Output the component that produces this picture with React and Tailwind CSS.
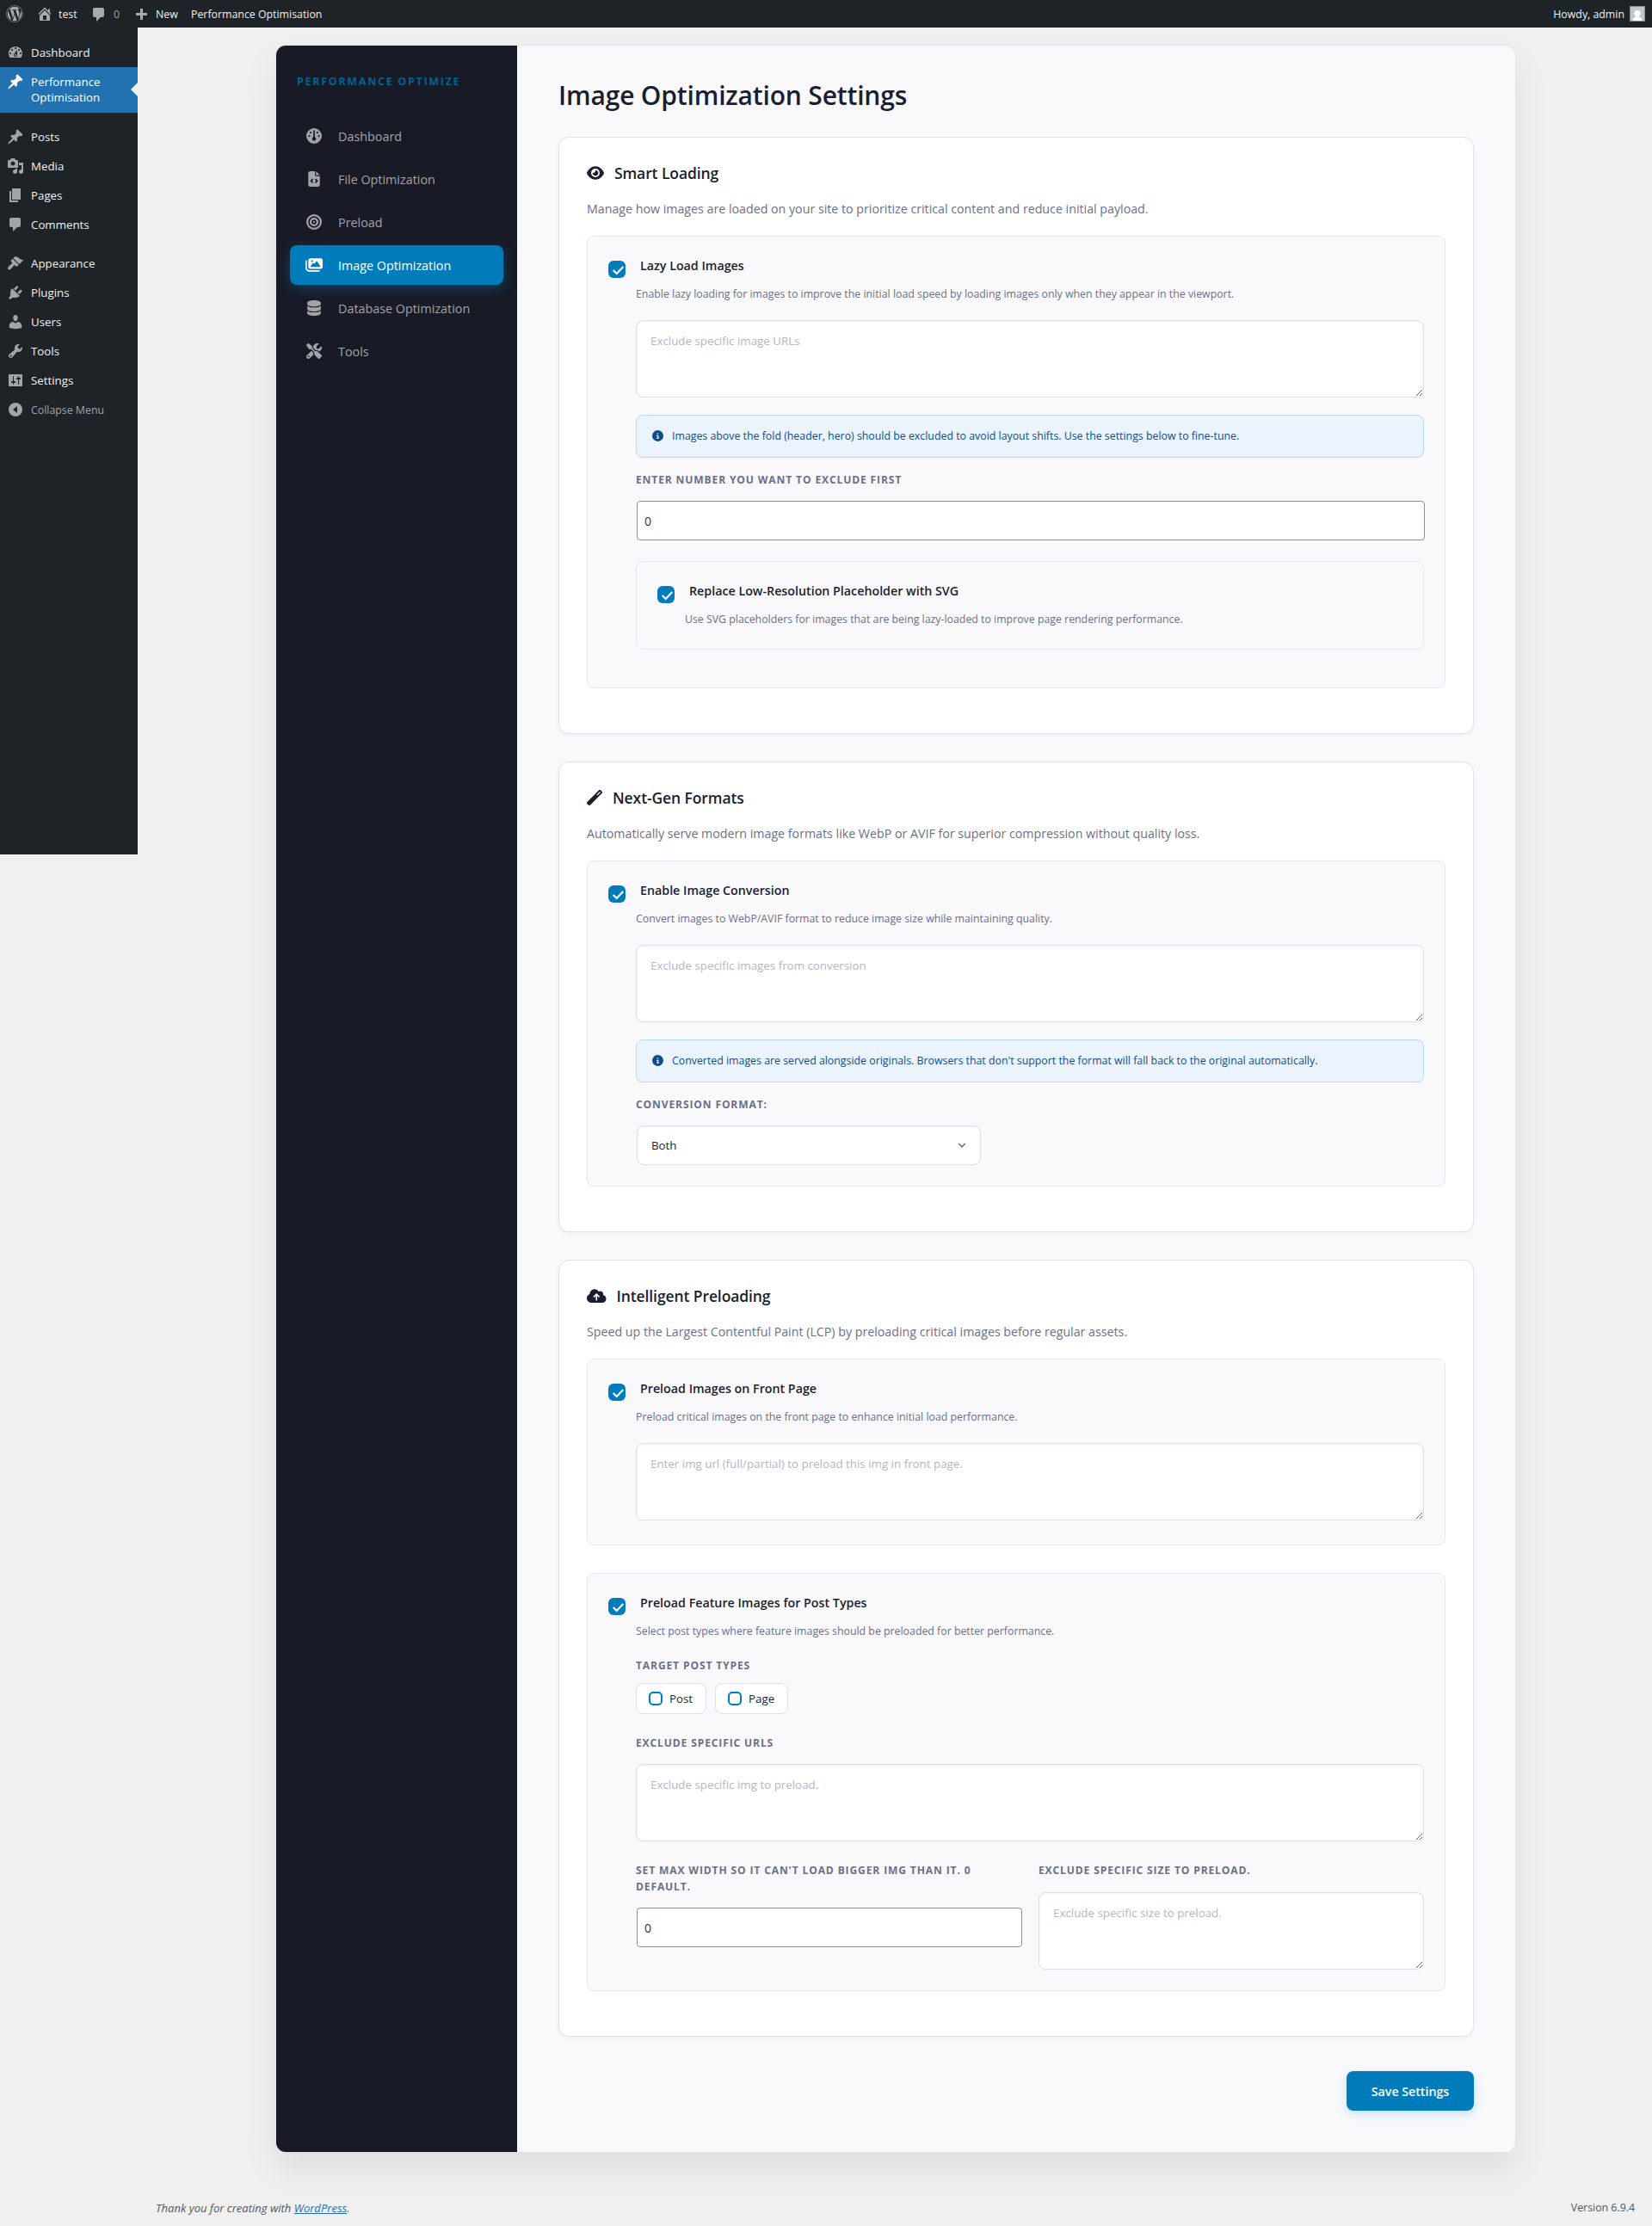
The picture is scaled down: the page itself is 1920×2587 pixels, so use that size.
import React, { useState } from 'react';
import clsx from 'clsx';
import {
  FaBullseye,
  FaCircleInfo,
  FaCloudArrowUp,
  FaDatabase,
  FaEye,
  FaFileCode,
  FaGauge,
  FaImages,
  FaScrewdriverWrench,
  FaWandMagic,
  FaWordpress,
} from 'react-icons/fa6';

// 20x20 admin menu glyphs
const glyphs = {
  home: 'M16 8.5l1.53 1.53-1.06 1.06L10 4.6l-6.47 6.49-1.06-1.06L10 2.5l4 4v-2h2v4zm-6-2.46l6 5.99V18H4v-5.97zM12 17v-5H8v5h4z',
  comments: 'M5 2h9c1.1 0 2 .9 2 2v7c0 1.1-.9 2-2 2h-2l-5 5v-5H5c-1.1 0-2-.9-2-2V4c0-1.1.9-2 2-2z',
  plus: 'M17 7v3h-5v5H9v-5H4V7h5V2h3v5h5z',
  dashboard:
    'M3.76 16h12.48c1.1-1.37 1.76-3.11 1.76-5 0-4.42-3.58-8-8-8s-8 3.58-8 8c0 1.89.66 3.63 1.76 5zM10 4c.55 0 1 .45 1 1s-.45 1-1 1-1-.45-1-1 .45-1 1-1zM6 6c.55 0 1 .45 1 1s-.45 1-1 1-1-.45-1-1 .45-1 1-1zm8 0c.55 0 1 .45 1 1s-.45 1-1 1-1-.45-1-1 .45-1 1-1zm-5.37 5.55L12 7v6c0 1.1-.9 2-2 2s-2-.9-2-2c0-.57.24-1.08.63-1.45zM4 10c.55 0 1 .45 1 1s-.45 1-1 1-1-.45-1-1 .45-1 1-1zm12 0c.55 0 1 .45 1 1s-.45 1-1 1-1-.45-1-1 .45-1 1-1zm-5 3c0-.55-.45-1-1-1s-1 .45-1 1 .45 1 1 1 1-.45 1-1z',
  pin: 'M10.44 3.02l1.82-1.82 6.36 6.35-1.83 1.82c-1.05-.68-2.48-.57-3.41.36l-.75.75c-.92.93-1.04 2.35-.35 3.41l-1.83 1.82-2.41-2.41-2.8 2.79c-.42.42-3.38 2.71-3.8 2.29s1.86-3.39 2.28-3.81l2.79-2.79L4.1 9.36l1.83-1.82c1.05.69 2.48.57 3.4-.36l.75-.75c.93-.92 1.05-2.35.36-3.41z',
  media:
    'M13 11V4c0-.55-.45-1-1-1h-1.67L9 1H5L3.67 3H2c-.55 0-1 .45-1 1v7c0 .55.45 1 1 1h10c.55 0 1-.45 1-1zM7 4.5c1.38 0 2.5 1.12 2.5 2.5S8.38 9.5 7 9.5 4.5 8.38 4.5 7 5.62 4.5 7 4.5zM14 6h5v10.5c0 1.38-1.12 2.5-2.5 2.5S14 17.88 14 16.5s1.12-2.5 2.5-2.5c.17 0 .34.02.5.05V9h-3V6zm-4 8.05V13h2v3.5c0 1.38-1.12 2.5-2.5 2.5S7 17.88 7 16.5 8.12 14 9.5 14c.17 0 .34.02.5.05z',
  page: 'M6 15V2h10v13H6zm-1 1h8v2H3V5h2v11z',
  appearance:
    'M14.48 11.06L7.41 3.99l1.5-1.5c.5-.56 2.3-.47 3.51.32 1.21.8 1.43 1.28 2.91 2.1 1.18.64 2.45 1.26 4.45.85zm-.71.71L6.7 4.7 4.93 6.47c-.39.39-.39 1.02 0 1.41l1.06 1.06c.39.39.39 1.03 0 1.42-.6.6-1.43 1.11-2.21 1.69-.35.26-.7.53-1.01.84C1.43 14.23.4 16.08 1.4 17.07c.99 1 2.84-.03 4.18-1.36.31-.31.58-.66.85-1.02.57-.78 1.08-1.61 1.69-2.21.39-.39 1.02-.39 1.41 0l1.06 1.06c.39.39 1.02.39 1.41 0z',
  plugins:
    'M13.11 4.36L9.87 7.6 8 5.73l3.24-3.24c.35-.34 1.05-.2 1.56.32.52.51.66 1.21.31 1.55zm-8 1.77l.91-1.12 9.01 9.01-1.19.84c-.71.71-2.63 1.16-3.82 1.16H6.14L4.9 17.26c-.59.59-1.54.59-2.12 0-.59-.58-.59-1.53 0-2.12l1.24-1.24v-3.88c0-1.13.4-3.19 1.09-3.89zm7.26 3.97l3.24-3.24c.34-.35 1.04-.21 1.55.31.52.51.66 1.21.31 1.55l-3.24 3.25z',
  users:
    'M10 9.25c-2.27 0-2.73-3.44-2.73-3.44C7 4.02 7.82 2 9.97 2c2.16 0 2.98 2.02 2.71 3.81 0 0-.41 3.44-2.68 3.44zm0 2.57L12.72 10c2.39 0 4.52 2.33 4.52 4.53v2.49s-3.65 1.13-7.24 1.13c-3.65 0-7.24-1.13-7.24-1.13v-2.49c0-2.25 1.94-4.48 4.47-4.48z',
  tools:
    'M16.68 9.77c-1.34 1.34-3.3 1.67-4.95.99l-5.41 6.52c-.99.99-2.59.99-3.58 0s-.99-2.59 0-3.57l6.52-5.42c-.68-1.65-.35-3.61.99-4.95 1.28-1.28 3.12-1.62 4.72-1.06l-2.89 2.89 2.82 2.82 2.86-2.87c.53 1.58.18 3.39-1.08 4.65zM3.81 16.21c.4.39 1.04.39 1.43 0 .4-.4.4-1.04 0-1.43-.39-.4-1.03-.4-1.43 0-.39.39-.39 1.03 0 1.43z',
  settings:
    'M18 16V4c0-.55-.45-1-1-1H3c-.55 0-1 .45-1 1v12c0 .55.45 1 1 1h14c.55 0 1-.45 1-1zM8 11h1c.55 0 1 .45 1 1s-.45 1-1 1H8v1.5c0 .28-.22.5-.5.5s-.5-.22-.5-.5V13H6c-.55 0-1-.45-1-1s.45-1 1-1h1V5.5c0-.28.22-.5.5-.5s.5.22.5.5V11zm5-2h-1c-.55 0-1-.45-1-1s.45-1 1-1h1V5.5c0-.28.22-.5.5-.5s.5.22.5.5V7h1c.55 0 1 .45 1 1s-.45 1-1 1h-1v5.5c0 .28-.22.5-.5.5s-.5-.22-.5-.5V9z',
  collapse: 'M10 2a8 8 0 1 0 0 16 8 8 0 0 0 0-16zM12 6v8l-5-4z',
};

const Glyph = ({ name, className }) => (
  <svg viewBox="0 0 20 20" fillRule="evenodd" className={clsx('w-5 h-5 shrink-0 fill-current', className)}>
    <path d={glyphs[name]} />
  </svg>
);

const adminMenu = [
  [
    { label: 'Dashboard', icon: 'dashboard' },
    { label: 'Performance Optimisation', icon: 'pin', current: true },
  ],
  [
    { label: 'Posts', icon: 'pin' },
    { label: 'Media', icon: 'media' },
    { label: 'Pages', icon: 'page' },
    { label: 'Comments', icon: 'comments' },
  ],
  [
    { label: 'Appearance', icon: 'appearance' },
    { label: 'Plugins', icon: 'plugins' },
    { label: 'Users', icon: 'users' },
    { label: 'Tools', icon: 'tools' },
    { label: 'Settings', icon: 'settings' },
    { label: 'Collapse Menu', icon: 'collapse', muted: true },
  ],
];

const tabs = [
  { label: 'Dashboard', Icon: FaGauge },
  { label: 'File Optimization', Icon: FaFileCode },
  { label: 'Preload', Icon: FaBullseye },
  { label: 'Image Optimization', Icon: FaImages },
  { label: 'Database Optimization', Icon: FaDatabase },
  { label: 'Tools', Icon: FaScrewdriverWrench },
];

const AdminBar = () => (
  <header className="h-8 flex items-center bg-[#1d2327] text-[#f0f0f1] text-[12.35px] leading-8 pl-[7px] pr-2">
    <FaWordpress size={20} className="text-[#a7aaad]" />
    <Glyph name="home" className="ml-[15px] text-[#a7aaad]" />
    <span className="ml-1.5 w-[37px] pt-px">test</span>
    <Glyph name="comments" className="mt-0.5 text-[#a7aaad]" />
    <span className="ml-[7px] w-[22px] pt-px text-[#9ca1a6]">0</span>
    <Glyph name="plus" className="mt-1 text-[#a7aaad]" />
    <span className="ml-[7px] w-[41px] pt-px">New</span>
    <span className="pt-px">Performance Optimisation</span>
    <span className="ml-auto pt-px">Howdy, admin</span>
    <svg viewBox="0 0 18 18" className="w-[18px] h-[18px] ml-1.5">
      <rect x="0.5" y="0.5" width="17" height="17" fill="#c3c4c7" stroke="#8c8f94" />
      <circle cx="9" cy="8.6" r="3.7" fill="#fff" />
      <path d="M3.5 17c.2-2.6 2-4 3.7-4.4h3.6c1.7.4 3.5 1.8 3.7 4.4z" fill="#fff" />
    </svg>
  </header>
);

const AdminMenu = () => (
  <nav className="w-40 h-[961px] shrink-0 pt-3 bg-[#1d2327] text-[#f0f0f1] text-[13.3px] leading-[18px]">
    {adminMenu.map((group, i) => (
      <ul key={i} className="mb-[11px]">
        {group.map(({ label, icon, current, muted }) => (
          <li
            key={label}
            className={clsx(
              'relative flex gap-2 pl-2',
              current ? 'h-[53px] bg-[#2271b1] text-white' : 'h-[34px]',
            )}
          >
            <Glyph name={icon} className={clsx('mt-[7px]', !current && 'text-[#a1a5a9]')} />
            <span className={clsx('w-[110px]', muted ? 'pt-[9px] text-[12.35px] text-[#a1a5a9]' : 'pt-2')}>{label}</span>
            {current && (
              <span className="absolute right-0 top-[18px] border-8 border-l-0 border-transparent border-r-[#f0f0f1]" />
            )}
          </li>
        ))}
      </ul>
    ))}
  </nav>
);

const Tabs = ({ active, onChange }) => (
  <aside className="w-[280px] shrink-0 px-4 bg-[#181a25] rounded-l-[11px]">
    <h2 className="pt-8 pl-2 h-[82px] text-[12.5px] leading-[20px] font-bold tracking-[1.7px] whitespace-nowrap text-[#00628f]">
      PERFORMANCE OPTIMIZE
    </h2>
    <ul className="flex flex-col gap-1">
      {tabs.map(({ label, Icon }) => (
        <li key={label}>
          <button
            onClick={() => onChange(label)}
            className={clsx(
              'flex items-center w-full h-[46px] pl-[18px] rounded-lg text-[14.35px]',
              label === active
                ? 'bg-[#007cba] text-white shadow-[0_4px_15px_rgba(0,124,186,0.4)]'
                : 'text-[#a3a3a8]',
            )}
          >
            <span className="flex justify-center w-5 mr-[18px]">
              <Icon size={18} className={clsx('shrink-0', Icon === FaImages && 'w-5')} />
            </span>
            <span className="pt-px">{label}</span>
          </button>
        </li>
      ))}
    </ul>
  </aside>
);

const Card = ({ Icon, iconClass, title, text, children }) => (
  <section className="mb-8 px-8 pt-8 pb-[52px] bg-white border border-[#e1e1ec] rounded-xl shadow-[0_2px_4px_rgba(0,0,0,0.04)]">
    <h3 className="flex items-center gap-3 h-5 text-[17.5px] tracking-[-0.1px] font-semibold text-[#1b1e30]">
      <Icon className={clsx('h-[18px] -mt-0.5', iconClass)} />
      <span className="-mt-px">{title}</span>
    </h3>
    <p className="my-5 text-[14.22px] leading-[22px] text-[#6b6f8a]">{text}</p>
    <div className="flex flex-col gap-8">{children}</div>
  </section>
);

const Option = ({ title, text, className, children }) => {
  const [checked, setChecked] = useState(true);

  return (
    <div className={clsx('flex gap-3 p-6 bg-[#f9f9fc] border border-[#e0ebf5] rounded-lg', className)}>
      <button
        role="checkbox"
        aria-checked={checked}
        onClick={() => setChecked(!checked)}
        className="w-5 h-5 mt-1 shrink-0 rounded-md bg-[#007cba]"
      >
        {checked && (
          <svg viewBox="0 0 20 20" className="w-5 h-5" fill="none" stroke="#fff" strokeWidth="2">
            <path d="M5.7 11l4 4 7.6-8" />
          </svg>
        )}
      </button>
      <div className="flex-1 min-w-0">
        <h4 className="pl-[5px] h-5 leading-5 text-[14.25px] font-semibold text-[#1b1e30]">{title}</h4>
        <p className="mt-[13px] leading-5 text-[12.33px] text-[#6b6f8a]">{text}</p>
        {children}
      </div>
    </div>
  );
};

const Label = ({ children, className }) => (
  <label className={clsx('block text-[12.1px] leading-[19px] font-bold tracking-[0.85px] uppercase text-[#6b6f8a]', className)}>
    {children}
  </label>
);

const TextBox = ({ placeholder, className }) => (
  <textarea
    placeholder={placeholder}
    className={clsx(
      'block w-full h-[90px] px-4 py-3 text-[13.35px] leading-[22px] bg-white border border-[#dfdfea] rounded-lg shadow-[inset_0_1px_3px_rgba(0,0,0,0.06)] placeholder:text-[#b5b5c6]',
      className,
    )}
  />
);

const NumberBox = ({ className }) => (
  <input
    type="text"
    defaultValue="0"
    className={clsx('block w-full h-[46px] ml-px px-2 text-[14px] text-[#2c3338] bg-white border border-[#8c8f94] rounded', className)}
  />
);

const Notice = ({ children }) => (
  <div className="flex items-center gap-2.5 h-[50px] mt-5 pl-[18px] bg-[#ebf4fd] border border-[#b8d8f4] rounded-lg text-[12.35px] text-[#0f4c8a]">
    <FaCircleInfo size={13} className="-mt-0.5" />
    {children}
  </div>
);

const Pill = ({ children }) => (
  <label className="flex items-center gap-2 h-9 pl-3.5 pr-[15px] bg-white border border-[#e1e1ec] rounded-lg text-[13.3px] text-[#1b1e30]">
    <span className="w-4 h-4 border-2 border-[#007cba] rounded-[5px]" />
    <span className="pt-px">{children}</span>
  </label>
);

const App = () => {
  const [active, setActive] = useState('Image Optimization');

  return (
    <div className="min-h-[2587px] bg-[#f0f0f1] font-['Open_Sans','Noto_Sans',sans-serif]">
      <AdminBar />
      <div className="flex">
        <AdminMenu />
        <div className="flex-1 min-w-0">
          <main className="flex w-[1442px] ml-40 mt-5 bg-[#f9f9fc] border border-[#e1e1ec] rounded-xl shadow-[0_20px_40px_rgba(0,0,0,0.08)]">
            <Tabs active={active} onChange={setActive} />
            <div className="flex-1 min-w-0 px-12 pt-10 pb-12">
              <h1 className="h-9 mb-[30px] text-[30px] leading-9 font-semibold tracking-[-0.17px] text-[#1b1e30]">
                Image Optimization Settings
              </h1>

              <Card
                Icon={FaEye}
                iconClass="w-5"
                title="Smart Loading"
                text="Manage how images are loaded on your site to prioritize critical content and reduce initial payload."
              >
                <Option
                  title="Lazy Load Images"
                  text="Enable lazy loading for images to improve the initial load speed by loading images only when they appear in the viewport."
                >
                  <TextBox className="mt-5" placeholder="Exclude specific image URLs" />
                  <Notice>
                    Images above the fold (header, hero) should be excluded to avoid layout shifts. Use the settings below to fine-tune.
                  </Notice>
                  <Label className="mt-4">Enter number you want to exclude first</Label>
                  <NumberBox className="mt-[15px]" />
                  <Option
                    className="mt-6 mb-5 h-[103px]"
                    title="Replace Low-Resolution Placeholder with SVG"
                    text="Use SVG placeholders for images that are being lazy-loaded to improve page rendering performance."
                  />
                </Option>
              </Card>

              <Card
                Icon={FaWandMagic}
                iconClass="w-[18px]"
                title="Next-Gen Formats"
                text="Automatically serve modern image formats like WebP or AVIF for superior compression without quality loss."
              >
                <Option
                  title="Enable Image Conversion"
                  text="Convert images to WebP/AVIF format to reduce image size while maintaining quality."
                >
                  <TextBox className="mt-5" placeholder="Exclude specific images from conversion" />
                  <Notice>
                    Converted images are served alongside originals. Browsers that don't support the format will fall back to the original automatically.
                  </Notice>
                  <Label className="mt-4">Conversion Format:</Label>
                  <div className="flex items-center justify-between w-[400px] h-[46px] mt-[15px] ml-px px-4 bg-white border border-[#dfdfea] rounded-lg shadow-[inset_0_1px_3px_rgba(0,0,0,0.06)] text-[13.3px] text-[#1b1e30]">
                    <span className="pt-px">Both</span>
                    <svg viewBox="0 0 10 6" className="w-2.5 h-1.5" fill="none" stroke="#6f6f7c" strokeWidth="1.6">
                      <path d="M1.2 1L5 4.8 8.8 1" />
                    </svg>
                  </div>
                </Option>
              </Card>

              <Card
                Icon={FaCloudArrowUp}
                iconClass="w-[22.5px]"
                title="Intelligent Preloading"
                text="Speed up the Largest Contentful Paint (LCP) by preloading critical images before regular assets."
              >
                <Option
                  title="Preload Images on Front Page"
                  text="Preload critical images on the front page to enhance initial load performance."
                >
                  <TextBox className="mt-5 mb-1" placeholder="Enter img url (full/partial) to preload this img in front page." />
                </Option>
                <Option
                  title="Preload Feature Images for Post Types"
                  text="Select post types where feature images should be preloaded for better performance."
                >
                  <Label className="mt-5">Target Post Types</Label>
                  <div className="flex gap-2.5 mt-[11px]">
                    <Pill>Post</Pill>
                    <Pill>Page</Pill>
                  </div>
                  <Label className="mt-6">Exclude Specific URLs</Label>
                  <TextBox className="mt-[15px]" placeholder="Exclude specific img to preload." />
                  <div className="grid grid-cols-2 gap-5 mt-6">
                    <div>
                      <Label>Set max width so it can't load bigger img than it. 0 default.</Label>
                      <NumberBox className="mt-[15px]" />
                    </div>
                    <div>
                      <Label>Exclude specific size to preload.</Label>
                      <TextBox className="mt-4" placeholder="Exclude specific size to preload." />
                    </div>
                  </div>
                </Option>
              </Card>

              <div className="flex justify-end pt-2">
                <button className="w-[148px] h-[46px] pt-px rounded-lg bg-[#007cba] text-[14.2px] font-semibold text-white shadow-[0_4px_12px_rgba(0,124,186,0.2)]">
                  Save Settings
                </button>
              </div>
            </div>
          </main>

          <footer className="flex justify-between mt-[54px] pl-[21px] pr-5 text-[12.35px] leading-5 text-[#50575e]">
            <p className="italic text-[13.04px]">
              Thank you for creating with <a className="underline text-[#2271b1]">WordPress</a>.
            </p>
            <p>Version 6.9.4</p>
          </footer>
        </div>
      </div>
    </div>
  );
};

export default App;
